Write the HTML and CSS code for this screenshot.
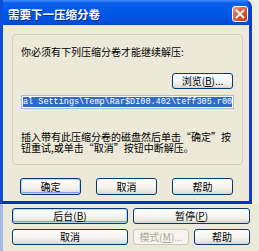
FILE: index.html
```html
<!DOCTYPE html>
<html lang="zh-CN">
<head>
<meta charset="utf-8">
<title>需要下一压缩分卷</title>
<link rel="stylesheet" href="styles.css">
</head>
<body>
<div class="screen">
  <div class="dialog">
    <div class="titlebar">
      <span class="title">需要下一压缩分卷</span>
      <span class="close">
        <svg width="10" height="10" viewBox="0 0 10 10"><path d="M1.5 1.5 L8.5 8.5 M8.5 1.5 L1.5 8.5" stroke="#fff" stroke-width="1.8" stroke-linecap="square"/></svg>
      </span>
    </div>
    <div class="body">
      <div class="group">
        <div class="line1">你必须有下列压缩分卷才能继续解压:</div>
        <div class="browse-row"><span class="btn browse">浏览(<u>B</u>)...</span></div>
        <div class="path"><span class="sel">al Settings\Temp\Rar$DI00.402\teff305.r00</span></div>
        <div class="para">插入带有此压缩分卷的磁盘然后单击“确定”按<br>钮重试,或单击“取消”按钮中断解压。</div>
      </div>
      <div class="actions">
        <span class="btn default">确定</span>
        <span class="btn">取消</span>
        <span class="btn">帮助</span>
      </div>
    </div>
  </div>
  <div class="behind"></div>
  <div class="parent">
    <span class="btn default wide">后台(<u>B</u>)</span>
    <span class="btn wide2">暂停(<u>P</u>)</span>
    <span class="btn">取消</span>
    <span class="btn disabled">模式(<u>M</u>)...</span>
    <span class="btn">帮助</span>
  </div>
</div>
</body>
</html>
```
FILE: styles.css
```css
html, body {
  margin: 0;
  padding: 0;
}
body {
  width: 259px;
  height: 251px;
  overflow: hidden;
  background: #ece9d8;
  font-family: "Noto Sans CJK SC", "Liberation Sans", sans-serif;
  font-size: 10px;
  color: #000;
}
.screen {
  display: grid;
  grid-template-columns: 252px 7px;
  grid-template-rows: 204px 47px;
  width: 259px;
  height: 251px;
}
.dialog {
  grid-column: 1;
  grid-row: 1;
  display: flex;
  flex-direction: column;
  box-sizing: border-box;
  border-left: 3px solid #0b4fd9;
  border-right: 3px solid #0a3fcf;
  border-bottom: 3px solid #0733c2;
  border-top-right-radius: 7px;
  background: #0058e6;
  overflow: hidden;
}
.titlebar {
  height: 25px;
  flex: none;
  display: flex;
  align-items: center;
  justify-content: space-between;
  padding: 2px 1px 0 5px;
  box-sizing: border-box;
  background: linear-gradient(#3d8dfb 0, #0b5fe9 3px, #0058e6 45%, #0052dd 85%, #0047cb 100%);
}
.title {
  color: #fff;
  font-weight: bold;
  font-size: 11.5px;
  line-height: 14px;
  text-shadow: 1px 1px 0 #0b2a8c;
}
.close {
  width: 16px;
  height: 16px;
  box-sizing: border-box;
  border: 1px solid #fff;
  border-radius: 3px;
  background: linear-gradient(135deg, #f0a080 0, #e06a45 35%, #cc4a25 75%, #b83a1a 100%);
  display: flex;
  align-items: center;
  justify-content: center;
}
.body {
  flex: 1;
  background: #ece9d8;
  padding: 9px 0 0 9px;
}
.group {
  width: 231px;
  height: 131px;
  box-sizing: border-box;
  border: 1px solid #d0d0bf;
  border-radius: 4px;
  padding: 0 9px 0 8px;
  display: flex;
  flex-direction: column;
}
.line1 {
  margin-top: 11px;
  line-height: 12px;
  white-space: nowrap;
}
.browse-row {
  margin-top: 15px;
  display: flex;
  justify-content: flex-end;
}
.btn {
  display: flex;
  align-items: center;
  justify-content: center;
  box-sizing: border-box;
  height: 16px;
  border: 1px solid #003c74;
  border-radius: 3px;
  background: linear-gradient(#ffffff 0, #f6f5f0 50%, #ebe8e0 80%, #d8d3c8 100%);
  font-size: 10px;
  line-height: 12px;
  white-space: nowrap;
}
.btn u {
  text-decoration: underline;
}
.browse {
  width: 61px;
}
.default {
  box-shadow: inset 0 0 0 1px #b8d4f8, inset 0 -1px 0 1px #7fa0ea;
}
.disabled {
  border-color: #c9c7ba;
  background: #f5f4ee;
  color: #aca899;
}
.path {
  margin-top: 6px;
  width: 213px;
  height: 14px;
  box-sizing: border-box;
  border: 1px solid #a7bad6;
  background: #fff;
  padding: 1px;
  overflow: hidden;
}
.sel {
  display: block;
  height: 10px;
  background: #316ac5;
  color: #fff;
  font-family: "Liberation Mono", monospace;
  font-size: 8.5px;
  line-height: 10px;
  white-space: nowrap;
  overflow: hidden;
}
.para {
  margin-top: 22px;
  line-height: 11px;
  white-space: nowrap;
}
.actions {
  margin: 13px 0 0 8px;
  display: flex;
  gap: 15px;
}
.actions .btn {
  width: 61px;
  height: 17px;
}
.behind {
  grid-column: 2;
  grid-row: 1;
  background: #efeee7;
}
.parent {
  grid-column: 1 / span 2;
  grid-row: 2;
  border-left: 3px solid #a8b9e8;
  padding: 4px 0 0 9px;
  display: grid;
  grid-template-columns: 116px 56px 56px;
  grid-template-rows: 16px 16px;
  column-gap: 5px;
  row-gap: 5px;
  align-content: start;
}
.wide2 {
  grid-column: 2 / span 2;
}
```
